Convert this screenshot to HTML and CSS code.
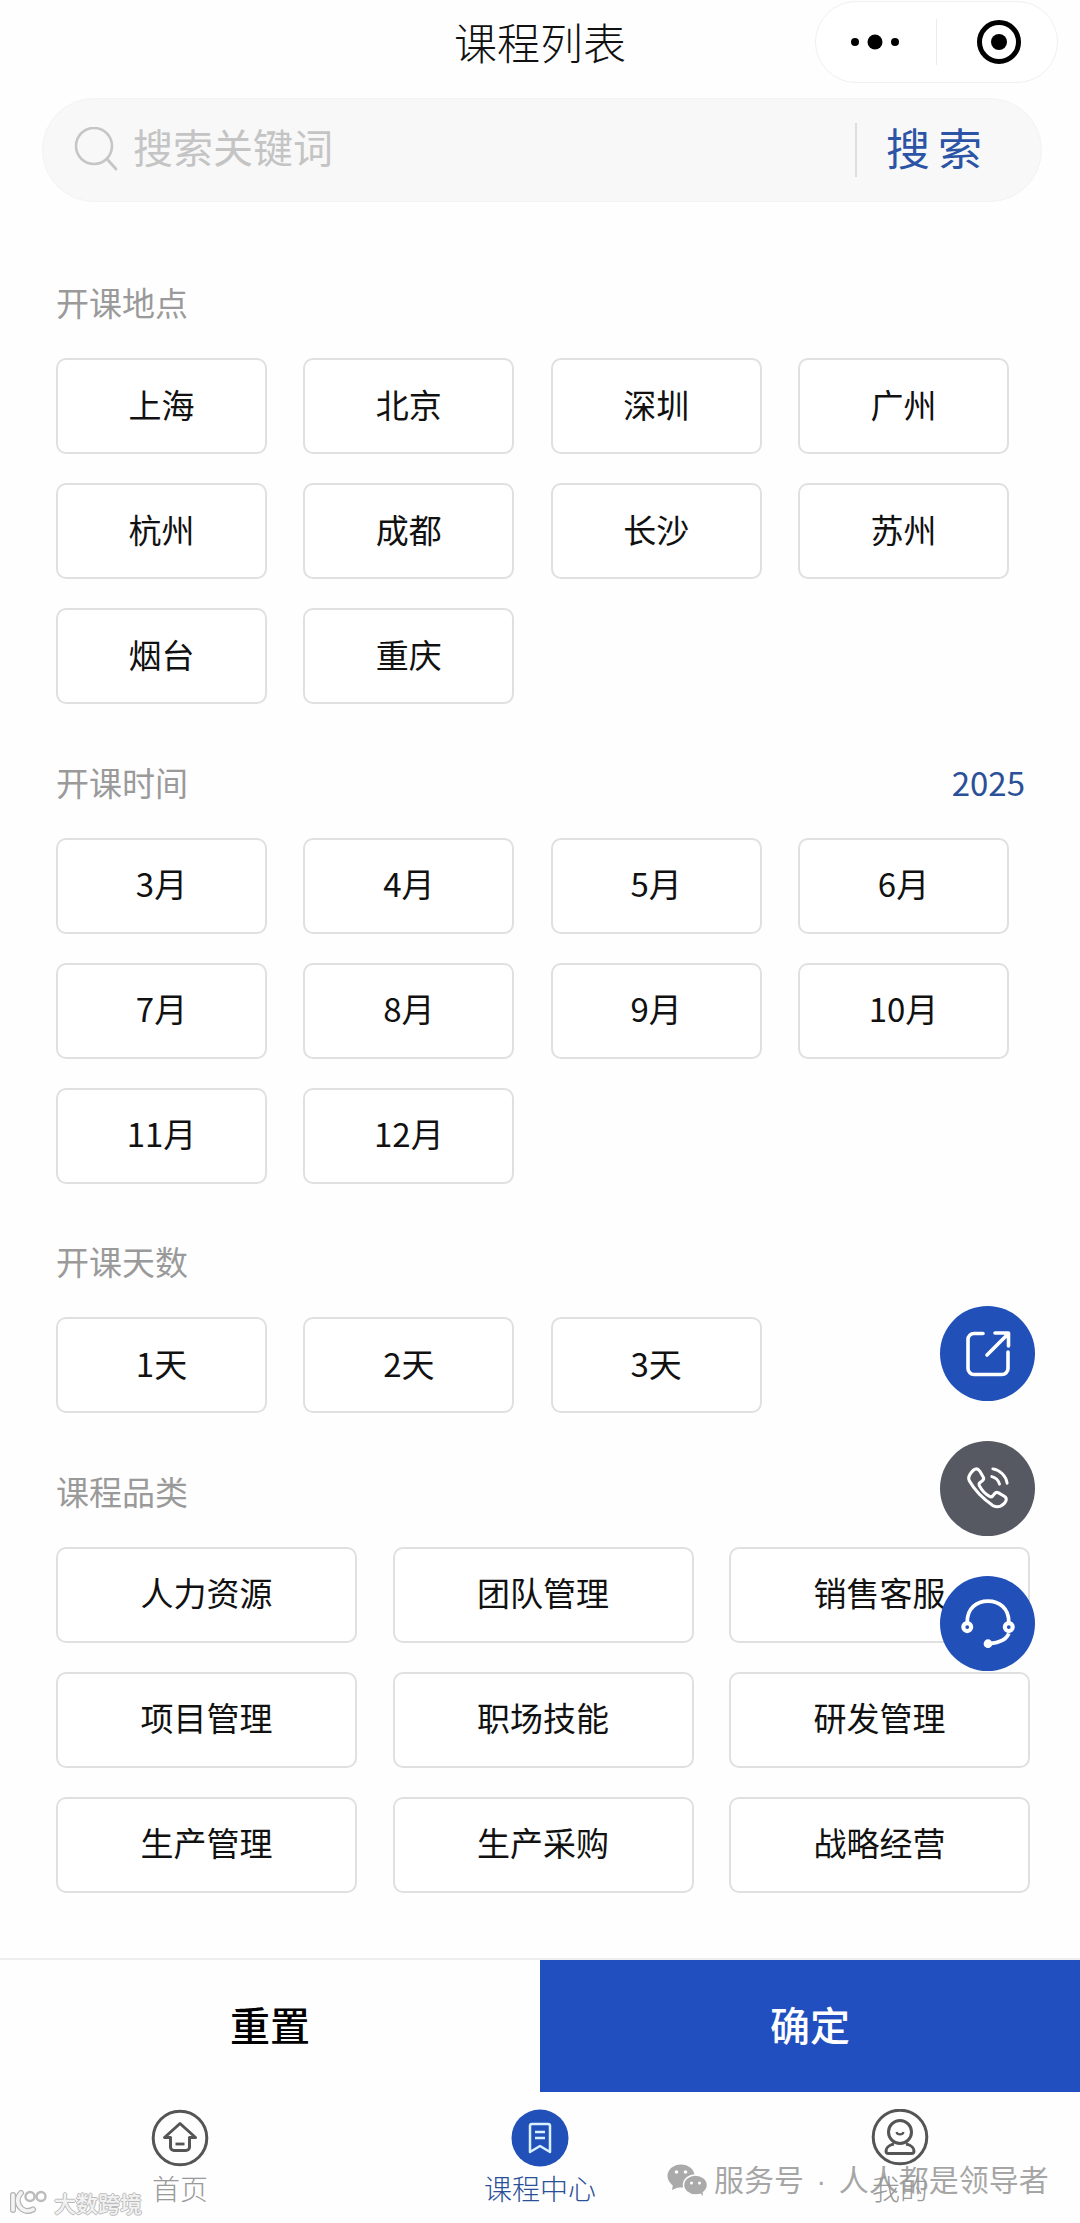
FILE: index.html
```html
<!DOCTYPE html>
<html lang="zh-CN">
<head>
<meta charset="utf-8">
<title>课程列表</title>
<link rel="stylesheet" href="styles.css">
</head>
<body>
<div class="page">
  <header class="nav">
    <h1 class="nav-title">课程列表</h1>
    <div class="capsule">
      <svg class="capsule-dots" viewBox="0 0 48 16"><circle cx="4" cy="8" r="4"/><circle cx="24" cy="8" r="7.500"/><circle cx="44" cy="8" r="4"/></svg>
      <span class="capsule-line"></span>
      <svg class="capsule-rec" viewBox="0 0 44 44"><circle cx="22" cy="22" r="19.500" fill="none" stroke="#000" stroke-width="5"/><circle cx="22" cy="22" r="8"/></svg>
    </div>
  </header>

  <div class="search">
    <svg class="search-icon" viewBox="0 0 44 44"><circle cx="20" cy="19" r="18" fill="none" stroke="#c6c6c6" stroke-width="2.600"/><path d="M33 32l9 10" fill="none" stroke="#c6c6c6" stroke-width="2.800" stroke-linecap="round"/></svg>
    <span class="search-hint">搜索关键词</span>
    <span class="search-line"></span>
    <span class="search-btn">搜索</span>
  </div>

  <main class="filters">
    <section class="group">
      <div class="group-head"><span>开课地点</span></div>
      <div class="chips chips-4">
        <div class="chip">上海</div><div class="chip">北京</div><div class="chip">深圳</div><div class="chip">广州</div>
        <div class="chip">杭州</div><div class="chip">成都</div><div class="chip">长沙</div><div class="chip">苏州</div>
        <div class="chip">烟台</div><div class="chip">重庆</div>
      </div>
    </section>
    <section class="group">
      <div class="group-head"><span>开课时间</span><span class="year">2025</span></div>
      <div class="chips chips-4">
        <div class="chip">3月</div><div class="chip">4月</div><div class="chip">5月</div><div class="chip">6月</div>
        <div class="chip">7月</div><div class="chip">8月</div><div class="chip">9月</div><div class="chip">10月</div>
        <div class="chip">11月</div><div class="chip">12月</div>
      </div>
    </section>
    <section class="group">
      <div class="group-head"><span>开课天数</span></div>
      <div class="chips chips-4">
        <div class="chip">1天</div><div class="chip">2天</div><div class="chip">3天</div>
      </div>
    </section>
    <section class="group">
      <div class="group-head"><span>课程品类</span></div>
      <div class="chips chips-3">
        <div class="chip">人力资源</div><div class="chip">团队管理</div><div class="chip">销售客服</div>
        <div class="chip">项目管理</div><div class="chip">职场技能</div><div class="chip">研发管理</div>
        <div class="chip">生产管理</div><div class="chip">生产采购</div><div class="chip">战略经营</div>
      </div>
    </section>
  </main>

  <div class="actions">
    <div class="action action-reset">重置</div>
    <div class="action action-ok">确定</div>
  </div>

  <nav class="tabs">
    <div class="tab">
      <svg class="tab-icon" viewBox="0 0 58 58"><circle cx="29" cy="29" r="26.800" fill="none" stroke="#555" stroke-width="3"/><path d="M29 14.500L13.500 28.500H19.500V38a3.500 3.500 0 0 0 3.500 3.500H35a3.500 3.500 0 0 0 3.500-3.500V28.500H44.500z" fill="none" stroke="#555" stroke-width="3" stroke-linejoin="round"/><path d="M24.500 35h9" stroke="#555" stroke-width="2.800"/></svg>
      <span class="tab-label">首页</span>
    </div>
    <div class="tab tab-active">
      <svg class="tab-icon" viewBox="0 0 58 58"><circle cx="29" cy="29" r="28.500" fill="#2050b8"/><path d="M21 15h16a2 2 0 0 1 2 2v26l-10-6-10 6V17a2 2 0 0 1 2-2z" fill="none" stroke="#d8f0ff" stroke-width="2.500" stroke-linejoin="round"/><path d="M24 23h10M24 29h10" stroke="#d8f0ff" stroke-width="2.500"/></svg>
      <span class="tab-label">课程中心</span>
    </div>
    <div class="tab">
      <svg class="tab-icon" viewBox="0 0 58 58"><circle cx="29" cy="28" r="26.800" fill="none" stroke="#555" stroke-width="3"/><circle cx="29" cy="23" r="11.500" fill="none" stroke="#555" stroke-width="3"/><path d="M25.500 23c.8 3.200 6.200 3.200 7 0" fill="none" stroke="#555" stroke-width="2.200"/><path d="M23 35c-5 1-8 4-8 7 0 1.500 1 2.500 2.500 2.500h23c1.500 0 2.500-1 2.500-2.500 0-3-3-6-8-7" fill="none" stroke="#555" stroke-width="3" stroke-linejoin="round"/></svg>
      <span class="tab-label">我的</span>
    </div>
  </nav>

  <div class="fab fab-share">
    <svg viewBox="0 0 46 46"><path d="M18 2.500H9a6 6 0 0 0-6 6v29a6 6 0 0 0 6 6h28a6 6 0 0 0 6-6V21" fill="none" stroke="#fff" stroke-width="3.600" stroke-linecap="round"/><path d="M22 24L43 3M30 2h13.500V15" fill="none" stroke="#fff" stroke-width="3.600" stroke-linecap="round" stroke-linejoin="round"/></svg>
  </div>
  <div class="fab fab-phone">
    <svg viewBox="0 0 48 48"><path d="M5 9c2-3 5-6 7-6 1.500 0 2.500 1 3.500 2.500l3.500 6c.8 1.500.5 3-1 4l-2.500 2c-1 .8-1 1.800-.5 3 2.500 5 6.500 9 11 11.500 1.200.6 2 .3 3-.8l2-2.500c1-1.300 2.500-1.500 4-.7l6 3.600c1.500 1 2.300 2.200 2 3.700-.4 2-3.200 5-6 6.500-2.500 1.200-5.500.6-8-.5C20 35 9.500 24.500 4.500 15.500 3.500 13.500 3.800 11 5 9z" fill="none" stroke="#fff" stroke-width="3.200" stroke-linejoin="round"/><path d="M28 11c4 1 7 4 8 8M29 3c7.500 1 14 7.500 15 15" fill="none" stroke="#fff" stroke-width="3" stroke-linecap="round"/></svg>
  </div>
  <div class="fab fab-service">
    <svg viewBox="0 0 52 48"><path d="M6 22C6 9 15 2 26 2s20 7 20 20" fill="none" stroke="#fff" stroke-width="3.600"/><circle cx="6" cy="27" r="3.800" fill="#2050b8" stroke="#fff" stroke-width="4"/><circle cx="46" cy="27" r="3.800" fill="#2050b8" stroke="#fff" stroke-width="4"/><path d="M46 33c-2 6-10 9-19 10" fill="none" stroke="#fff" stroke-width="3.600"/><circle cx="26" cy="43" r="4.200" fill="#fff"/></svg>
  </div>

  <div class="mark-left">
    <svg class="mark-left-logo" viewBox="0 0 38 24"><path d="M3 5v15M11 3C6 8 7 15 12 19c3 2.500 7 2.500 11 .5" fill="none" stroke="#b4b4b4" stroke-width="6" stroke-linecap="round"/><path d="M3 5v15M11 3C6 8 7 15 12 19c3 2.500 7 2.500 11 .5" fill="none" stroke="#f4f4f4" stroke-width="3.600" stroke-linecap="round"/><circle cx="20" cy="6.500" r="4.500" fill="none" stroke="#bbb" stroke-width="2.400"/><circle cx="31" cy="6.500" r="4.500" fill="none" stroke="#bbb" stroke-width="2.400"/></svg>
    <span>大数跨境</span>
  </div>
  <div class="mark-right">
    <svg class="mark-right-logo" viewBox="0 0 40 32"><ellipse cx="14" cy="12" rx="13.500" ry="11.500" fill="#aaa"/><path d="M6 20l-1 6 7-3z" fill="#aaa"/><ellipse cx="28.500" cy="21" rx="12" ry="10" fill="#aaa" stroke="#fefefe" stroke-width="1.500"/><path d="M33 29l3 3-.5-5z" fill="#aaa"/><circle cx="9.500" cy="8" r="1.800" fill="#fefefe"/><circle cx="18.500" cy="8" r="1.800" fill="#fefefe"/><circle cx="24.500" cy="19" r="1.500" fill="#fefefe"/><circle cx="32.500" cy="19" r="1.500" fill="#fefefe"/></svg>
    <span>服务号<span class="mark-dot"> · </span>人人都是领导者</span>
  </div>
</div>
</body>
</html>
```

FILE: styles.css
```css
* { box-sizing: border-box; }
html, body { margin: 0; padding: 0; }
body {
  width: 1080px;
  height: 2223px;
  background: #fefefe;
  font-family: "Noto Sans CJK SC", "Noto Sans", sans-serif;
  overflow: hidden;
}
.page {
  position: relative;
  width: 1080px;
  height: 2223px;
  display: flex;
  flex-direction: column;
}
.nav {
  position: relative;
  height: 98px;
  flex: none;
}
.nav-title {
  margin: 0;
  padding-top: 12px;
  text-align: center;
  font-size: 43px;
  line-height: 58px;
  font-weight: 300;
  color: #111;
}
.capsule {
  position: absolute;
  left: 815px;
  top: 1px;
  width: 243px;
  height: 82px;
  border: 1px solid #f0f0f0;
  border-radius: 41px;
  background: #fff;
}
.capsule-dots {
  position: absolute;
  left: 35px;
  top: 32px;
  width: 48px;
  height: 16px;
}
.capsule-line {
  position: absolute;
  left: 120px;
  top: 17px;
  width: 1px;
  height: 46px;
  background: #ececec;
}
.capsule-rec {
  position: absolute;
  left: 161px;
  top: 18px;
  width: 44px;
  height: 44px;
}
.search {
  flex: none;
  margin: 0 38px 0 42px;
  height: 104px;
  padding: 0 0 0 31px;
  display: flex;
  align-items: center;
  background: #f8f8f8;
  border: 1px solid #f3f3f3;
  border-radius: 52px;
}
.search-icon {
  width: 44px;
  height: 44px;
  flex: none;
  margin-bottom: 2px;
}
.search-hint {
  margin: 0 0 8px 15px;
  font-size: 40px;
  line-height: 56px;
  color: #c4c4c4;
  flex: 1;
}
.search-line {
  width: 2px;
  height: 54px;
  background: #dedede;
  flex: none;
}
.search-btn {
  margin: 0 51px 6px 29px;
  font-size: 44px;
  line-height: 60px;
  letter-spacing: 8px;
  color: #2c54a6;
  flex: none;
}
.filters {
  flex: 1;
  padding: 79px 0 0 56px;
  display: flex;
  flex-direction: column;
  gap: 56.500px;
}
.group-head {
  height: 44px;
  width: 969px;
  margin-bottom: 33px;
  display: flex;
  justify-content: space-between;
  font-size: 33px;
  line-height: 42px;
  color: #9a9a9a;
}
.year {
  color: #2a5098;
}
.chips {
  display: grid;
  row-gap: 29px;
}
.chips-4 {
  grid-template-columns: repeat(4, 211px);
  column-gap: 36.330px;
}
.chips-3 {
  grid-template-columns: repeat(3, 301px);
  column-gap: 35.500px;
}
.chip {
  height: 96px;
  padding-bottom: 5px;
  display: flex;
  align-items: center;
  justify-content: center;
  border: 2px solid #e0e0e0;
  border-radius: 10px;
  background: #fff;
  font-size: 33px;
  color: #111;
}
.actions {
  flex: none;
  height: 134px;
  display: flex;
  border-top: 2px solid #efefef;
}
.action {
  flex: 1;
  padding-bottom: 5px;
  display: flex;
  align-items: center;
  justify-content: center;
  font-size: 40px;
  font-weight: 500;
}
.action-reset {
  color: #000;
}
.action-ok {
  color: #fff;
  background: #214fc0;
}
.tabs {
  flex: none;
  height: 131px;
  padding-top: 17px;
  display: grid;
  grid-template-columns: repeat(3, 1fr);
  justify-items: center;
}
.tab {
  display: flex;
  flex-direction: column;
  align-items: center;
}
.tab-icon {
  width: 58px;
  height: 58px;
}
.tab-label {
  margin-top: 1px;
  font-size: 28px;
  line-height: 40px;
  color: #999;
  font-weight: 300;
}
.tab-active .tab-label {
  color: #2a5098;
}
.fab {
  position: absolute;
  left: 940px;
  width: 95px;
  height: 95px;
  border-radius: 50%;
  display: flex;
  align-items: center;
  justify-content: center;
}
.fab svg {
  width: 46px;
  height: 46px;
}
.fab-share { top: 1306px; background: #2050b8; }
.fab-phone { top: 1441px; background: #565862; }
.fab-service { top: 1576px; background: #2050b8; }
.fab-service svg { width: 54px; height: 50px; }
.mark-left {
  position: absolute;
  left: 10px;
  top: 2186px;
  display: flex;
  align-items: center;
  gap: 6px;
  font-size: 22px;
  line-height: 32px;
  font-weight: 500;
  color: #f2f2f2;
  text-shadow: 1px 0 #bbb, -1px 0 #bbb, 0 1px #bbb, 0 -1px #bbb;
  white-space: nowrap;
}
.mark-left-logo {
  width: 38px;
  height: 24px;
}
.mark-right {
  position: absolute;
  left: 667px;
  top: 2157px;
  display: flex;
  align-items: center;
  gap: 7px;
  font-size: 30px;
  line-height: 42px;
  color: rgba(150, 150, 150, 0.85);
  white-space: nowrap;
}
.mark-dot {
  font-family: "Liberation Sans", sans-serif;
  margin: 0 4px;
}
.mark-right-logo {
  width: 40px;
  height: 32px;
}
```
